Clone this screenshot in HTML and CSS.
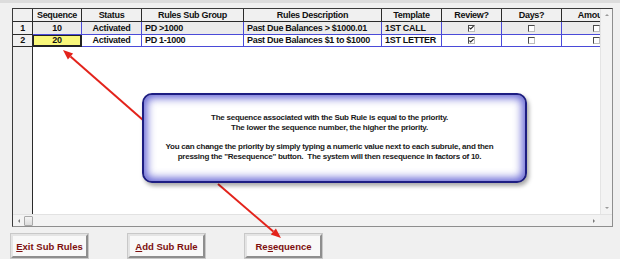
FILE: index.html
```html
<!DOCTYPE html>
<html>
<head>
<meta charset="utf-8">
<link rel="stylesheet" href="styles.css">
</head>
<body>
<div class="page">
  <div class="topbar"></div>
  <div class="frame">
    <div class="main">
      <div class="table-area">
        <div class="grid">
          <div class="hc rn"></div>
          <div class="hc">Sequence</div>
          <div class="hc">Status</div>
          <div class="hc">Rules Sub Group</div>
          <div class="hc">Rules Description</div>
          <div class="hc">Template</div>
          <div class="hc">Review?</div>
          <div class="hc">Days?</div>
          <div class="hc">Amount?</div>

          <div class="rc rn">1</div>
          <div class="dc r1 ctr">10</div>
          <div class="dc r1 ctr">Activated</div>
          <div class="dc r1">PD &gt;1000</div>
          <div class="dc r1">Past Due Balances &gt; $1000.01</div>
          <div class="dc r1">1ST CALL</div>
          <div class="dc r1 ctr"><span class="cb"><svg width="6" height="6" viewBox="0 0 6 6"><path d="M0.5 2.5 L2 4.2 L5.5 0.8" stroke="#222" stroke-width="1.3" fill="none"/></svg></span></div>
          <div class="dc r1 ctr"><span class="cb"></span></div>
          <div class="dc r1 ctr"><span class="cb"></span></div>

          <div class="rc rn">2</div>
          <div class="dc ctr sel">20</div>
          <div class="dc ctr">Activated</div>
          <div class="dc">PD 1-1000</div>
          <div class="dc">Past Due Balances $1 to $1000</div>
          <div class="dc">1ST LETTER</div>
          <div class="dc ctr"><span class="cb"><svg width="6" height="6" viewBox="0 0 6 6"><path d="M0.5 2.5 L2 4.2 L5.5 0.8" stroke="#222" stroke-width="1.3" fill="none"/></svg></span></div>
          <div class="dc ctr"><span class="cb"></span></div>
          <div class="dc ctr"><span class="cb"></span></div>
        </div>
        <div class="filler"><div class="rn-fill"></div></div>
      </div>
      <div class="vbar">
        <span class="tri up"></span>
        <span class="tri down"></span>
      </div>
    </div>
    <div class="hbar">
      <div class="htrack">
        <span class="tri left"></span>
        <span class="thumb"></span>
        <span class="spacer"></span>
        <span class="tri right"></span>
      </div>
      <div class="corner"></div>
    </div>
  </div>
  <div class="buttons">
    <button class="btn"><u>E</u>xit Sub Rules</button>
    <button class="btn"><u>A</u>dd Sub Rule</button>
    <button class="btn">Re<u>s</u>equence</button>
  </div>

  <svg class="arrows" width="620" height="259" viewBox="0 0 620 259">
    <line x1="143" y1="120" x2="70.5" y2="56.6" stroke="#e3231b" stroke-width="2"/>
    <polygon points="63,50 73.1,53.6 67.9,59.6" fill="#e3231b"/>
    <line x1="218" y1="184" x2="273.3" y2="231.6" stroke="#e3231b" stroke-width="2"/>
    <polygon points="281,238 270.8,234.6 275.9,228.5" fill="#e3231b"/>
  </svg>

  <div class="callout">
    <p>The sequence associated with the Sub Rule is equal to the priority.<br>The lower the sequence number, the higher the priority.</p>
    <p>You can change the priority by simply typing a numeric value next to each subrule, and then<br>pressing the "Resequence" button.&nbsp; The system will then resequence in factors of 10.</p>
  </div>
</div>
</body>
</html>
```

FILE: styles.css
```css
* { box-sizing: border-box; }
html, body { margin: 0; padding: 0; }
body {
  background: #f0f0f0;
  font-family: "Liberation Sans", Arial, sans-serif;
  color: #111;
}
.page {
  position: relative;
  width: 620px;
  height: 259px;
  overflow: hidden;
  background: #f0f0f0;
}
.topbar {
  height: 3px;
  background: #dcdcdc;
}
.frame {
  margin: 5px 0 0 12px;
  width: 601px;
  height: 219px;
  border: 1px solid #8e8e8e;
  border-top-color: #3a3a3a;
  border-left-color: #3a3a3a;
  display: flex;
  flex-direction: column;
  background: #fff;
}
.main {
  flex: 1;
  display: flex;
  min-height: 0;
}
.table-area {
  width: 587px;
  overflow: hidden;
  display: flex;
  flex-direction: column;
  background: #fff;
}
.grid {
  display: grid;
  grid-template-columns: 20px 49px 60px 102px 138px 60px 60px 60px 70px;
  grid-template-rows: 13px 13px 12px;
  width: 619px;
  font-size: 9px;
  font-weight: bold;
  letter-spacing: -0.3px;
}
.grid > div {
  display: flex;
  align-items: center;
  white-space: nowrap;
  overflow: hidden;
  line-height: 1;
}
.hc {
  background: #f0f0f0;
  justify-content: center;
  border-right: 1px solid #2a2a2a;
  border-bottom: 1px solid #2a2a2a;
}
.rn {
  background: #f0f0f0;
  justify-content: center;
  border-right: 1px solid #2a2a2a;
  border-bottom: 1px solid #2a2a2a;
}
.dc {
  padding-left: 3px;
  border-right: 1px solid #4a4ad8;
  border-bottom: 1px solid #4a4ad8;
  background: #fff;
}
.dc.r1 { background: #ebebeb; }
.dc.ctr { justify-content: center; padding-left: 0; }
.dc.sel {
  background: #f9f77a;
  box-shadow: inset 0 0 0 1px #222;
  border-right-color: #222;
  border-bottom-color: #222;
}
.cb {
  display: inline-flex;
  align-items: center;
  justify-content: center;
  width: 7px;
  height: 7px;
  background: #fff;
  border: 1px solid;
  border-color: #4a4a4a #bdbdbd #bdbdbd #4a4a4a;
}
.filler {
  flex: 1;
  display: flex;
}
.rn-fill {
  width: 20px;
  background: #f0f0f0;
  border-right: 1px solid #2a2a2a;
}
.vbar {
  width: 12px;
  background: #f3f3f3;
  border-left: 1px solid #e4e4e4;
  display: flex;
  flex-direction: column;
  justify-content: space-between;
  align-items: center;
  padding: 5px 0 5px;
}
.hbar {
  height: 12px;
  display: flex;
  background: #f3f3f3;
  border-top: 1px solid #e2e2e2;
}
.htrack {
  flex: 1;
  display: flex;
  align-items: center;
  padding: 0 5px 0 5px;
}
.thumb {
  width: 9px;
  height: 10px;
  margin-left: 4px;
  border: 1px solid #a8a8a8;
  border-radius: 1px;
  background: linear-gradient(#f4f4f4, #dcdcdc);
}
.spacer { flex: 1; }
.corner {
  width: 12px;
  background: #f0f0f0;
}
.tri {
  width: 0;
  height: 0;
  display: block;
}
.tri.up { border-left: 2px solid transparent; border-right: 2px solid transparent; border-bottom: 2px solid #9a9a9a; }
.tri.down { border-left: 2px solid transparent; border-right: 2px solid transparent; border-top: 2px solid #9a9a9a; }
.tri.left { border-top: 2px solid transparent; border-bottom: 2px solid transparent; border-right: 2px solid #7a7a7a; }
.tri.right { border-top: 2px solid transparent; border-bottom: 2px solid transparent; border-left: 2px solid #7a7a7a; }
.buttons {
  display: flex;
  gap: 40px;
  margin: 7px 0 0 11px;
}
.btn {
  width: 77px;
  height: 24px;
  padding: 0;
  font-family: "Liberation Sans", Arial, sans-serif;
  font-size: 9.5px;
  font-weight: bold;
  color: #7d0f0f;
  background: #f8f8f8;
  border: 2px solid;
  border-color: #e4e4e4 #8e8e8e #8e8e8e #e4e4e4;
  box-shadow: 0 0 0 1px #c8c8c8;
}
.btn u { text-decoration: underline; }
.arrows {
  position: absolute;
  left: 0;
  top: 0;
  pointer-events: none;
}
.callout {
  position: absolute;
  left: 142px;
  top: 93px;
  width: 385px;
  height: 90px;
  border: 2px solid #1d1d82;
  border-radius: 10px;
  background: #fff;
  box-shadow: inset 0 0 9px 3px rgba(72, 72, 205, 0.85), 2px 3px 4px rgba(0, 0, 0, 0.35);
  padding: 18px 10px 0 0;
  text-align: center;
  font-size: 8px;
  font-weight: bold;
  letter-spacing: -0.25px;
  line-height: 10px;
  color: #1a1a1a;
}
.callout p { margin: 0 0 9px 0; }
```
